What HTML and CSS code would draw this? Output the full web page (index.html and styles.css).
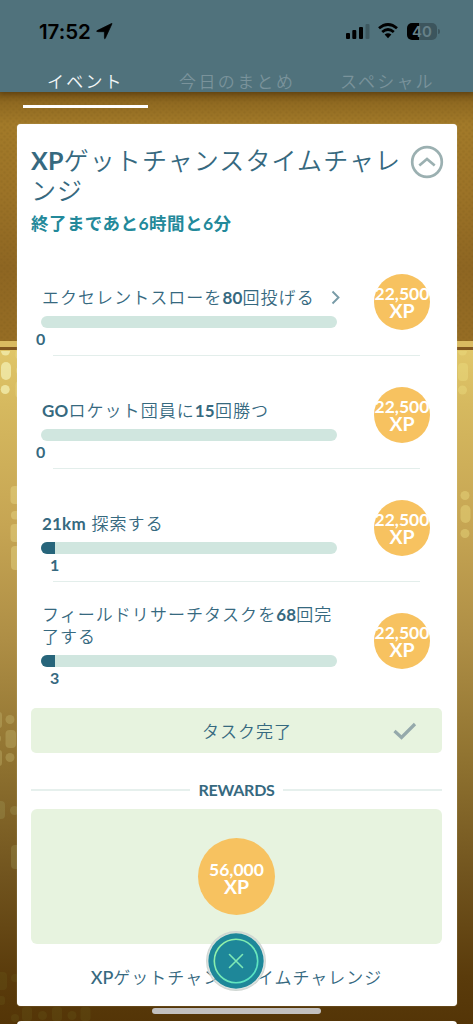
FILE: index.html
```html
<!DOCTYPE html>
<html lang="ja">
<head>
<meta charset="utf-8">
<title>イベント</title>
<link rel="stylesheet" href="styles.css">
</head>
<body>
<div class="screen">
  <svg class="backdrop" width="473" height="1024" viewBox="0 0 473 1024" aria-hidden="true">
    <defs>
      <linearGradient id="upper" x1="0" y1="0" x2="0" y2="1"><stop offset="0" stop-color="#795618"/><stop offset=".045" stop-color="#906a21"/><stop offset=".13" stop-color="#a27a29"/><stop offset=".4" stop-color="#9c7327"/><stop offset=".7" stop-color="#8e6622"/><stop offset="1" stop-color="#966d24"/></linearGradient>
      <linearGradient id="lower" x1="0" y1="0" x2="0" y2="1"><stop offset="0" stop-color="#e0c669"/><stop offset=".08" stop-color="#d6b95f"/><stop offset=".26" stop-color="#c6a553"/><stop offset=".43" stop-color="#ae8e45"/><stop offset=".6" stop-color="#917431"/><stop offset=".78" stop-color="#71541e"/><stop offset=".93" stop-color="#5a3b0b"/><stop offset="1" stop-color="#543507"/></linearGradient>
      <pattern id="weave" width="6" height="6" patternUnits="userSpaceOnUse"><circle cx="1.5" cy="1.5" r="1.3" fill="#6f4b12" opacity=".12"/><circle cx="4.5" cy="4.5" r="1.3" fill="#6f4b12" opacity=".12"/></pattern>
    </defs>
    <rect y="92" width="473" height="250" fill="url(#upper)"/>
    <rect y="92" width="473" height="250" fill="url(#weave)"/>
    <rect y="341" width="473" height="6" fill="#d9ba61"/>
    <rect y="347" width="473" height="3" fill="#80561f"/>
    <rect y="350" width="473" height="674" fill="url(#lower)"/>
    <g fill="#f1eaa8" opacity=".85"><path d="M1 351h9a4.5 4.5 0 0 1-9 0"/><rect x="1" y="362" width="10" height="18" rx="5"/><circle cx="5.200" cy="389.500" r="4.500"/></g>
    <g fill="#efe291" opacity=".38"><rect x="15.500" y="350" width="8" height="9" rx="3"/><rect x="16" y="367" width="8" height="7" rx="3"/><rect x="15.500" y="381" width="8" height="17" rx="4"/><rect x="10.500" y="486" width="10" height="18" rx="4"/><rect x="11" y="511" width="10" height="8.500" rx="4"/><rect x="10.500" y="524" width="10" height="18" rx="4"/><rect x="11" y="546" width="10" height="24" rx="4"/></g>
    <g fill="#eee083" opacity=".4"><path d="M458 351h9a4.500 4.500 0 0 1-9 0"/><rect x="458" y="363" width="10" height="18" rx="4"/><circle cx="462.500" cy="390" r="4.500"/><circle cx="465" cy="495.500" r="4.500"/><rect x="460.500" y="505" width="10" height="18" rx="5"/><circle cx="465" cy="533.500" r="4.500"/></g>
    <g fill="#c8bb73" opacity=".35"><rect x="-7" y="712" width="9" height="16" rx="3"/><rect x="-7" y="735" width="8" height="7" rx="3"/><rect x="-7" y="750" width="9" height="16" rx="3"/><circle cx="10" cy="719.500" r="4.500"/><rect x="5.500" y="730" width="10.500" height="18" rx="4"/><circle cx="10" cy="757.500" r="4.500"/></g>
    <g fill="#a7a360" opacity=".28"><rect x="-5" y="801" width="10" height="18" rx="4"/><circle cx="14.500" cy="810.500" r="4.500"/><rect x="11" y="845" width="10" height="24" rx="4"/></g>
    <g fill="#777529" opacity=".16"><rect x="-3" y="972" width="10" height="18" rx="4"/><circle cx="15" cy="978" r="4"/><rect x="-3" y="996" width="8" height="9" rx="3"/><circle cx="15" cy="1018" r="4"/><rect x="22" y="1007" width="10" height="14" rx="3"/><circle cx="42.500" cy="1015.500" r="4.500"/><rect x="52" y="1007" width="10" height="14" rx="3"/><circle cx="72" cy="1015.500" r="4.500"/><rect x="80.500" y="1007" width="10" height="14" rx="3"/></g>
  </svg>

  <header class="header">
    <div class="status">
      <span class="clock">17:52</span>
      <svg class="location" width="17" height="17" viewBox="0 0 17 17"><path d="M16 .7 9.300 15.300Q8.700 16.500 8.400 15V8.700H2Q-.3 8.400 1.200 7.600L15 .8Q16.300.1 16 .7Z" stroke="#000" stroke-width=".7"/></svg>
      <svg class="signal" width="24" height="16" viewBox="0 0 24 16"><rect y="10" width="4" height="6" rx="1"/><rect x="6.300" y="7" width="4" height="9" rx="1"/><rect x="13" y="4" width="4" height="12" rx="1"/><rect x="19.500" y="1" width="4" height="15" rx="1" opacity=".22"/></svg>
      <svg class="wifi" width="20" height="16" viewBox="0 0 20 16"><g fill="none" stroke="#000" stroke-width="2.800"><path d="M1 5.300Q10-2.400 19 5.300"/><path d="M4.200 9Q10 4.100 15.800 9"/></g><path d="M6.600 11.600Q10 8.800 13.400 11.600L10 15.200Z"/></svg>
      <div class="battery"><span class="cell">40</span><span class="nub"></span></div>
    </div>
    <nav class="tabs">
      <span class="tab active">イベント</span>
      <span class="tab today">今日のまとめ</span>
      <span class="tab special">スペシャル</span>
    </nav>
  </header>
  <div class="indicator"></div>

  <main class="card">
    <div class="card-head">
      <h1><b>XP</b>ゲットチャンスタイムチャレンジ</h1>
      <svg class="collapse" width="34" height="34" viewBox="0 0 34 34"><circle cx="17" cy="17" r="14.800"/><path d="m9.300 20.500 7.700-6.500 7.700 6.500"/></svg>
    </div>
    <p class="deadline">終了まであと6時間と6分</p>

    <section class="tasks">
      <article class="task">
        <div class="detail">
          <div class="label"><span>エクセレントスローを<b>80</b>回投げる</span><svg class="more" width="9" height="15" viewBox="0 0 9 15"><path d="m1.500 1.500 6 6-6 6"/></svg></div>
          <div class="track"></div><div class="count">0</div>
        </div>
        <div class="xp"><span>22,500</span><strong>XP</strong></div>
      </article>
      <article class="task">
        <div class="detail">
          <div class="label"><span><b>GO</b>ロケット団員に<b>15</b>回勝つ</span></div>
          <div class="track"></div><div class="count">0</div>
        </div>
        <div class="xp"><span>22,500</span><strong>XP</strong></div>
      </article>
      <article class="task">
        <div class="detail">
          <div class="label"><span><b>21km</b> 探索する</span></div>
          <div class="track"><div class="fill"></div></div><div class="count started">1</div>
        </div>
        <div class="xp"><span>22,500</span><strong>XP</strong></div>
      </article>
      <article class="task">
        <div class="detail">
          <div class="label"><span>フィールドリサーチタスクを<b>68</b>回完<br>了する</span></div>
          <div class="track"><div class="fill"></div></div><div class="count started">3</div>
        </div>
        <div class="xp"><span>22,500</span><strong>XP</strong></div>
      </article>
    </section>

    <div class="complete"><span>タスク完了</span><svg class="check" width="26" height="18" viewBox="0 0 26 18"><path d="m2.500 9 7 6.500 13.500-13.500"/></svg></div>
    <div class="divider"><span>REWARDS</span></div>
    <div class="reward"><div class="xp large"><span>56,000</span><strong>XP</strong></div></div>
    <p class="caption"><span>XP</span>ゲットチャンスタイムチャレンジ</p>
  </main>
  <div class="next-card"></div>
  <div class="home-bar"></div>
  <button class="close" aria-label="閉じる"><svg width="60" height="60" viewBox="0 0 60 60"><defs><linearGradient id="ring" x1="0" y1="0" x2="1" y2="1"><stop stop-color="#9ff4a2"/><stop offset="1" stop-color="#4ce0c9"/></linearGradient></defs><circle cx="30" cy="30" r="27.700" fill="#1e8799"/><circle cx="30" cy="30" r="21.700" fill="none" stroke="url(#ring)" stroke-width="1.600"/><path d="m23.500 23.500 13 13m0-13-13 13" stroke="#7ee8b5" stroke-width="1.600" stroke-linecap="round"/></svg></button>
</div>
</body>
</html>
```
FILE: styles.css
```css
* { box-sizing: border-box; }
body { margin: 0; font-family: Lato, "Noto Sans CJK JP", sans-serif; color: #36697f; }
h1, p { margin: 0; }
.screen { position: relative; width: 473px; height: 1024px; overflow: hidden; isolation: isolate; }
.backdrop { position: absolute; inset: 0; z-index: -1; }
.header { height: 92px; background: #50727c; box-shadow: 0 2px 5px #4e350d99; }
.status { height: 64px; padding: 22px 32px 0 39px; display: flex; align-items: flex-start; }
.clock { width: 52px; font: 600 20.500px/20px Inter, sans-serif; letter-spacing: -.05px; color: #000; }
.location { margin: 1px 0 0 5px; }
.signal { margin: 1px 0 0 233px; }
.wifi { margin: 1px 0 0 8px; }
.battery { display: flex; align-items: center; margin: 1px 0 0 9px; gap: 1px; }
.cell { width: 30px; height: 17px; border-radius: 5px; background: linear-gradient(90deg, #000 0 12px, #3c555d 12px); font: 600 15px/17px Inter, sans-serif; color: #668088; text-align: center; }
.nub { width: 2px; height: 5px; border-radius: 0 2px 2px 0; background: #3c555d; }
.tabs { display: flex; height: 28px; padding-left: 47px; font-family: "Noto Sans CJK JP", sans-serif; font-size: 17px; line-height: 34px; letter-spacing: 2.200px; white-space: nowrap; }
.tab { color: #7a939b; font-weight: 350; }
.active { width: 132px; color: #f3f7f8; }
.today { width: 161px; letter-spacing: 2.400px; }
.indicator { position: relative; width: 125px; height: 3px; margin: 13px 0 0 23px; background: #fff; }
.card { width: 440px; height: 882px; margin: 16px 0 0 17px; padding: 21px 15px 0 14px; background: #fff; border-radius: 4px; box-shadow: 0 0 1px 0 #d8cfb1; }
.card-head { display: flex; align-items: flex-start; }
h1 { width: 379px; height: 60px; font-size: 25px; line-height: 30px; font-weight: 350; letter-spacing: 1.080px; word-break: break-all; line-break: anywhere; }
h1 b { font-weight: 700; letter-spacing: .2px; }
.collapse { margin: 0 -2px 0 auto; flex-shrink: 0; fill: none; stroke: #9bb0b1; stroke-width: 2.700; }
.deadline { height: 40px; padding-top: 7px; font-size: 17.500px; line-height: 24px; font-weight: 700; letter-spacing: .45px; color: #23899a; }
.tasks { margin-top: 5px; }
.task { display: flex; height: 113px; padding: 20px 12px 0 10px; position: relative; justify-content: space-between; }
.task:not(:last-child)::after { content: ""; position: absolute; left: 22px; right: 22px; bottom: 7px; height: 1px; background: #e3eeeb; }
.detail { width: 296px; display: flex; flex-direction: column; }
.label { height: 46px; padding: 0 0 7px 1px; display: flex; align-items: flex-end; justify-content: space-between; font-size: 17px; line-height: 22px; font-weight: 350; letter-spacing: 1.040px; white-space: nowrap; }
.label b { font-weight: 700; letter-spacing: .2px; }
.more { margin: 0 -3px 4px 0; fill: none; stroke: #789ba7; stroke-width: 1.900; }
.track { height: 12px; border-radius: 6px; background: #d0e6df; overflow: hidden; flex-shrink: 0; }
.fill { width: 14px; height: 12px; background: #27657b; }
.count { height: 24px; margin-left: -5px; font-size: 16px; line-height: 22px; font-weight: 700; }
.started { margin-left: 9px; }
.xp { width: 56px; height: 56px; border-radius: 50%; background: #f7c260; color: #fff; display: flex; flex-direction: column; align-items: center; justify-content: center; font-size: 17.500px; line-height: 17px; font-weight: 700; flex-shrink: 0; }
.xp strong { font-size: 19.500px; line-height: 18px; font-weight: 700; }
.task .xp { margin-top: 4px; }
.complete { height: 45px; margin-top: 6px; border-radius: 5px; background: #e7f3df; display: flex; align-items: center; justify-content: flex-end; font-size: 17px; letter-spacing: 1px; font-weight: 350; }
.complete span { margin-right: 100px; }
.check { margin-right: 24px; fill: none; stroke: #95a9ab; stroke-width: 3.200; }
.divider { height: 56px; padding-top: 17px; display: flex; align-items: center; gap: 8px; font-size: 16px; line-height: 20px; font-weight: 700; letter-spacing: -.25px; }
.divider::before, .divider::after { content: ""; flex: 1; height: 2px; background: #e6f0ed; }
.reward { height: 135px; border-radius: 6px; background: #e7f3df; display: flex; justify-content: center; align-items: center; }
.xp.large { width: 77px; height: 77px; padding-top: 3px; }
.caption { padding-top: 21px; text-align: center; font-size: 17px; line-height: 24px; font-weight: 350; letter-spacing: 1px; white-space: nowrap; }
.caption span { font-size: 18px; font-weight: 500; letter-spacing: 0; }
.next-card { height: 10px; margin: 15px 0 0 17px; width: 440px; background: #fff; border-radius: 4px; }
.home-bar { position: absolute; left: 152px; top: 1008px; width: 169px; height: 6px; border-radius: 3px; background: #c2c0bf; }
.close { position: absolute; left: 206px; top: 931px; width: 60px; height: 60px; padding: 0; border: 0; border-radius: 50%; background: none; box-shadow: inset 0 0 2px 2px #ced5d1; }
.close svg { display: block; }
```
